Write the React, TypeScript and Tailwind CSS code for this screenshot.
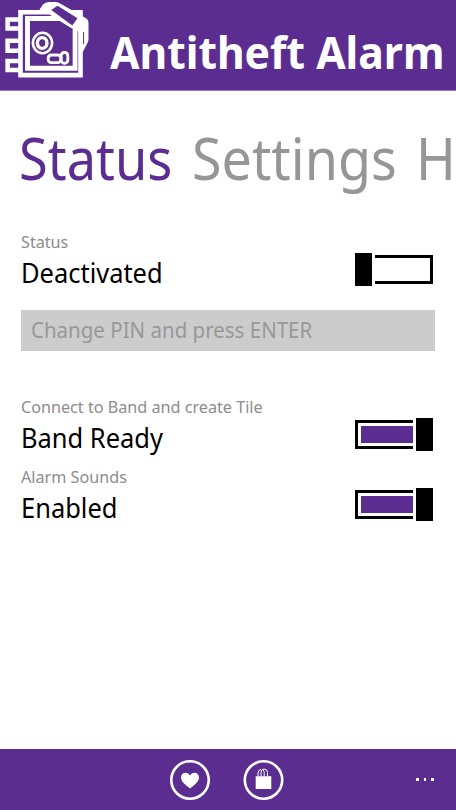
import type { ReactNode } from "react";
import clsx from "clsx";

const SafeLogo = () => (
  <svg className="shrink-0" width="96" height="90" viewBox="0 0 96 90" fill="none" stroke="#fff">
    {/* Hinges */}
    <path d="M19 19.400H7.600v9.200H19M19 40.800H7.600v9.900H19M19 61H7.600v8.900H19" strokeWidth="4.5" />
    {/* Door */}
    <path d="M20.500 12.200h60v62.900h-60z" strokeWidth="4.6" />
    <path d="M27.500 18.500h47.600v49.700H27.500z" strokeWidth="4.9" />
    {/* Dial */}
    <ellipse cx="42.500" cy="43" rx="9.600" ry="10.200" strokeWidth="2.6" />
    <ellipse cx="42.200" cy="43" rx="4.800" ry="5.400" strokeWidth="3.4" />
    {/* Handle */}
    <rect x="48.200" y="55" width="12.600" height="7.600" rx="3" strokeWidth="2.9" />
    <rect x="61.200" y="52.500" width="6.600" height="10.700" rx="3" strokeWidth="2.9" />
    {/* Band */}
    <path
      d="M39.500 9.500 43 4.500Q45 2 49 2h6.500Q58 2 61 4L86.500 18.500q2 1.500 2 4V39q0 2-1 4l-5 9.500-.8-2.500V35L76 29.500 71 28 45.500 12z"
      fill="#fff"
      stroke="none"
    />
    <path d="m51.200 10 6.300-4.200L77.500 18.300 72.300 25.500z" fill="#5c2d91" stroke="none" />
    <path d="M83.600 32v12" stroke="#5c2d91" strokeWidth="1" />
  </svg>
);

const Toggle = ({ on }: { on?: boolean }) =>
  on ? (
    <div className="flex h-[33px] w-[78px] items-center justify-between">
      <div className="h-[29px] w-[58px] border-y-[3px] border-l-[3px] border-black py-[3px] pl-[3px]">
        <div className="h-full bg-[#5c2d91]" />
      </div>
      <div className="h-full w-[17px] bg-black" />
    </div>
  ) : (
    <div className="flex h-[33px] w-[78px] items-center justify-between">
      <div className="h-full w-[17px] bg-black" />
      <div className="h-[29px] w-[58px] border-y-[3px] border-r-[3px] border-black" />
    </div>
  );

type SettingProps = {
  label: ReactNode;
  value: ReactNode;
  on?: boolean;
  className?: string;
};

const Setting = ({ label, value, on, className }: SettingProps) => (
  <div className={clsx("flex h-[58px] justify-between pr-[2px]", className)}>
    <div className="whitespace-nowrap">
      <p className="h-[22px] origin-left scale-x-[0.98] text-[16.5px] leading-[20px] text-[#8c8c8c]">
        {label}
      </p>
      <p className="w-fit origin-left scale-x-[0.943] text-[27px] leading-[37px] text-black">{value}</p>
    </div>
    <div className="pt-[21px]">
      <Toggle on={on} />
    </div>
  </div>
);

const App = () => (
  <div className="flex h-[810px] w-[456px] flex-col overflow-hidden bg-white font-['Noto_Sans',sans-serif]">
    <header className="flex h-[91px] shrink-0 border-b border-[#9a7cbc] bg-[#5c2d91]">
      <SafeLogo />
      <h1 className="mt-[27px] ml-[14px] w-[334px] origin-left scale-x-[0.947] text-[45px] leading-[50px] font-bold whitespace-nowrap text-white">
        Antitheft Alarm
      </h1>
    </header>

    <nav className="mt-[26px] flex h-[80px] shrink-0 pl-[19px] text-[58.5px] leading-[80px] whitespace-nowrap">
      <span className="w-[173px] origin-left scale-x-[0.895] text-[#5c2d91]">Status</span>
      <span className="w-[224px] origin-left scale-x-[0.92] text-[#969696]">Settings</span>
      <span className="w-[40px] origin-left scale-x-[0.92] text-[#969696]">H</span>
    </nav>

    <main className="flex-1 px-[21px] pt-[35px]">
      <Setting label="Status" value="Deactivated" />
      <div className="mt-[20px] flex h-[41px] items-center bg-[#cccccc] pl-[10px] text-[21.5px] text-[#989898]">
        <span className="origin-left scale-x-[0.953]">Change PIN and press ENTER</span>
      </div>
      <Setting className="mt-[46px]" label="Connect to Band and create Tile" value="Band Ready" on />
      <Setting className="mt-[12px]" label="Alarm Sounds" value="Enabled" on />
    </main>

    <footer className="grid h-[61px] shrink-0 grid-cols-[170px_40px_33px_41px_1fr] items-center bg-[#5c2d91] text-white">
      <svg className="col-start-2" width="40" height="40" viewBox="0 0 40 40">
        <circle cx="20" cy="20" r="18.7" fill="none" stroke="currentColor" strokeWidth="2.6" />
        <path
          d="M20 28.500C15 24.500 11 21.500 11 17.500c0-3 2-4.800 4.500-4.800 2 0 3.600 1 4.500 2.900.9-1.900 2.500-2.900 4.500-2.900 2.500 0 4.500 1.800 4.500 4.800 0 4-4 7-9 11z"
          fill="currentColor"
        />
      </svg>
      <svg className="col-start-4" width="41" height="40" viewBox="0 0 41 40">
        <circle cx="20.5" cy="20" r="18.7" fill="none" stroke="currentColor" strokeWidth="2.6" />
        <path d="M12.700 16.200h15.600V29H12.700z" fill="currentColor" />
        <path
          d="M15 16v-3q0-3 3-3.500M18 16v-3.500Q18 9 21.200 9t3.300 3.500V16M21.200 16v-3.500q0-2-1.500-2.800"
          fill="none"
          stroke="currentColor"
          strokeWidth="1"
        />
      </svg>
      <div className="flex justify-end gap-[5px] pr-[22px]">
        <span className="size-[2.6px] bg-white" />
        <span className="size-[2.6px] bg-white" />
        <span className="size-[2.6px] bg-white" />
      </div>
    </footer>
  </div>
);

export default App;
